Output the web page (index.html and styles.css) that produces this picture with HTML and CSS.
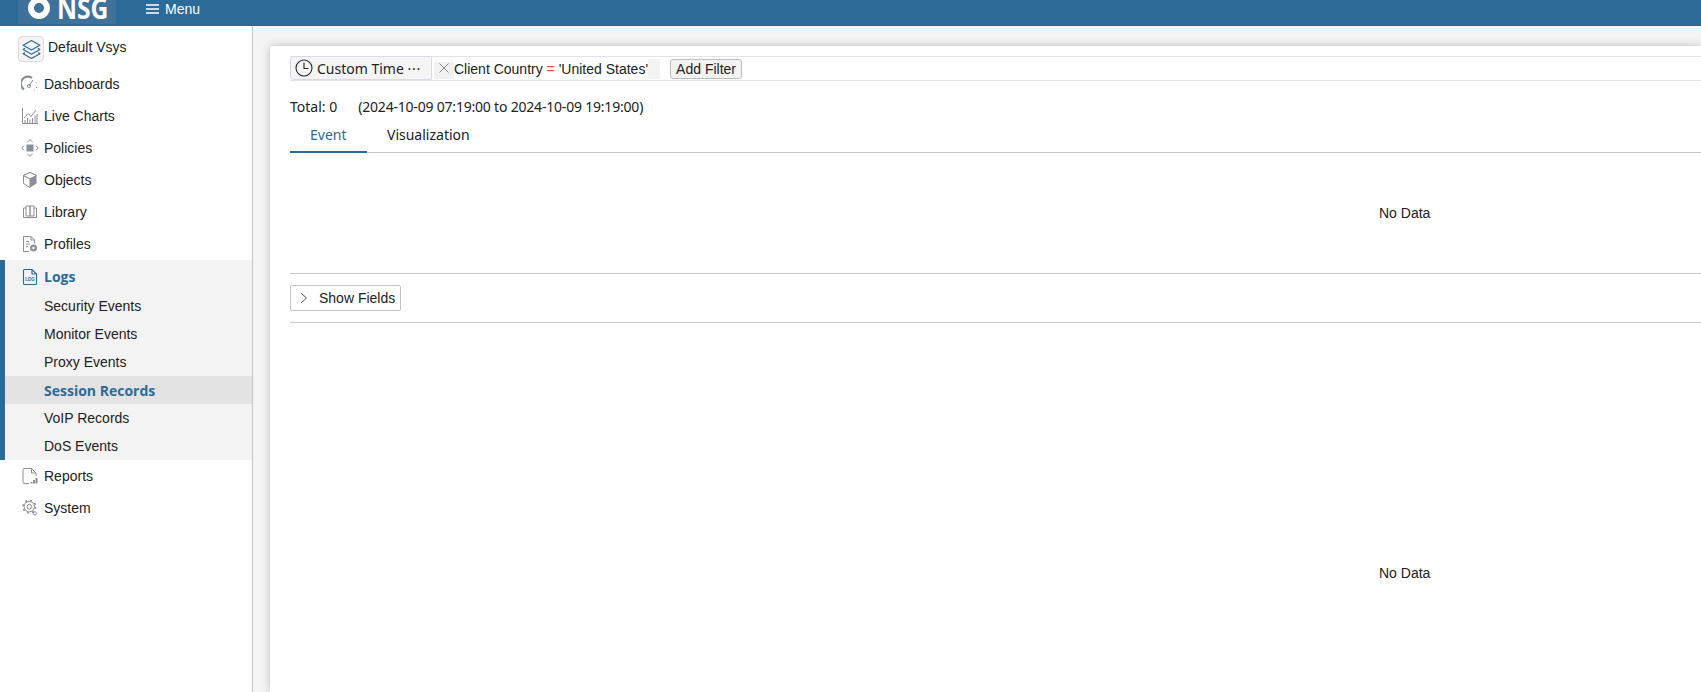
FILE: index.html
```html
<!DOCTYPE html>
<html lang="en">
<head>
<meta charset="utf-8">
<title>NSG Session Records</title>
<link rel="stylesheet" href="styles.css">
</head>
<body>
<header class="topbar">
  <div class="brand">
    <svg class="brand-ring" width="24" height="24" viewBox="0 0 24 24"><circle cx="12" cy="12" r="8" fill="none" stroke="#fff" stroke-width="6"/></svg>
    <span class="brand-name">NSG</span>
  </div>
  <div class="menu-toggle">
    <svg width="13" height="10" viewBox="0 0 13 10"><path d="M0 1h13M0 5h13M0 9h13" stroke="#fff" stroke-width="1.5"/></svg>
    <span>Menu</span>
  </div>
</header>
<div class="shell">
  <aside class="sidebar">
    <div class="vsys">
      <span class="vsys-icon">
        <svg width="19" height="19" viewBox="1 1 16 16" fill="none" stroke="#2c6a97" stroke-width="1" stroke-linejoin="round"><path d="M9 1.500 16 5.500 9 9.500 2 5.500Z"/><path d="M3.500 8 2 9l7 4 7-4-1.500-1"/><path d="M3.500 11.500 2 12.500l7 4 7-4-1.500-1"/></svg>
      </span>
      <span>Default Vsys</span>
    </div>
    <nav class="nav">
      <a class="nav-item">
        <svg class="ico" width="18" height="18" viewBox="0 0 18 18" fill="none" stroke="#8b8f97"><path d="M3 14.500A7 7 0 0 1 11 2.800" stroke-width="2.200"/><path d="M8 11 12 5" stroke-width="1"/><circle cx="8" cy="11" r="1.600" stroke-width="1"/><path d="M15 7.500v1M15.500 12v1M13 15h.8" stroke-width="1"/></svg>
        <span>Dashboards</span>
      </a>
      <a class="nav-item">
        <svg class="ico" width="18" height="18" viewBox="0 0 18 18" fill="none" stroke="#8b8f97" stroke-width="1"><path d="M1.500 1v15.500H17"/><path d="M3 11 7 6.500l3 3L15 3"/><path d="M4 16v-3M6.500 16v-5M9 16v-3.500M11.500 16v-5M14 16V8.500M16 16v-9"/></svg>
        <span>Live Charts</span>
      </a>
      <a class="nav-item">
        <svg class="ico" width="18" height="18" viewBox="0 0 18 18" fill="none" stroke="#8b8f97" stroke-width="1"><path d="M6.500 3 9 .8l2.500 2.200M6.500 15 9 17.200l2.500-2.200M3 6.500.8 9 3 11.500M15 6.500 17.200 9 15 11.500"/><rect x="6" y="6" width="6" height="6" fill="#8b8f97"/></svg>
        <span>Policies</span>
      </a>
      <a class="nav-item">
        <svg class="ico" width="18" height="18" viewBox="0 0 18 18"><path d="M9 1.500 15.500 4.500v8L9 16.500Z" fill="#8b8f97"/><path d="M9 1.500 2.500 4.500v8L9 16.500M2.500 4.500 9 7.800l6.500-3.300M9 7.800v8.700M9 1.500l6.500 3" fill="none" stroke="#8b8f97"/><path d="M2.500 4.500 9 1.500l6.500 3L9 7.800Z" fill="#fff" stroke="#8b8f97"/></svg>
        <span>Objects</span>
      </a>
      <a class="nav-item">
        <svg class="ico" width="18" height="18" viewBox="0 0 18 18" fill="none" stroke="#8b8f97" stroke-width="1"><path d="M5 3h4v10H5zM9 3h4v10H9z"/><path d="M5 5H2.500v9.500h13V5H13M9 14.500v1"/></svg>
        <span>Library</span>
      </a>
      <a class="nav-item">
        <svg class="ico" width="18" height="18" viewBox="0 0 18 18" fill="none" stroke="#8b8f97" stroke-width="1"><path d="M8 16.500H2.500v-15h7.500l3.500 3.500v3.500"/><path d="M10 1.500V5h3.500M5 6.500h3M5 9h4M5 11.500h2"/><circle cx="12.500" cy="13" r="3.500" fill="#8b8f97" stroke="none"/><circle cx="12.500" cy="13" r="1.200" fill="#fff" stroke="none"/></svg>
        <span>Profiles</span>
      </a>
      <div class="nav-group">
        <a class="nav-item nav-item-active">
          <svg class="ico" width="18" height="18" viewBox="0 0 18 18" fill="none" stroke="#2c6a97" stroke-width="1.100"><path d="M11 1.500H3.500a1 1 0 0 0-1 1v13a1 1 0 0 0 1 1h11a1 1 0 0 0 1-1V6Z"/><path d="M11 1.500V6h4.500"/><text class="ico-label" x="9" y="12.500" text-anchor="middle">LOG</text></svg>
          <span>Logs</span>
        </a>
        <a class="sub-item">Security Events</a>
        <a class="sub-item">Monitor Events</a>
        <a class="sub-item">Proxy Events</a>
        <a class="sub-item sub-item-active">Session Records</a>
        <a class="sub-item">VoIP Records</a>
        <a class="sub-item">DoS Events</a>
      </div>
      <a class="nav-item">
        <svg class="ico" width="18" height="18" viewBox="0 0 18 18" fill="none" stroke="#8b8f97" stroke-width="1"><path d="M8 16.500H3a1 1 0 0 1-1-1V2.500a1 1 0 0 1 1-1h7.500L15 6v3"/><path d="M10.500 1.500V6H15"/><path d="M10.500 16.500v-1.500M13 16.500v-3.500M15.500 16.500V11" stroke-width="2"/></svg>
        <span>Reports</span>
      </a>
      <a class="nav-item">
        <svg class="ico" width="18" height="18" viewBox="0 0 18 18" fill="none" stroke="#8b8f97"><circle cx="8.300" cy="7.700" r="5.200" stroke-width="1"/><circle cx="8.300" cy="7.700" r="6.300" stroke-width="1.500" stroke-dasharray="2 2.950"/><circle cx="8.300" cy="7.700" r="2.300" stroke-width="1"/><circle cx="13.800" cy="14.300" r="1.600" stroke-width="1"/></svg>
        <span>System</span>
      </a>
    </nav>
  </aside>
  <main class="content">
    <section class="card">
      <div class="filter-bar">
        <div class="time-chip">
          <svg width="18" height="18" viewBox="0 0 18 18" fill="none" stroke="#222" stroke-width="1.100"><circle cx="9" cy="9" r="8"/><path d="M9 3.500V9.500H13.500"/></svg>
          <span class="time-label">Custom Time <span class="dots">···</span></span>
        </div>
        <div class="filter-chip">
          <span class="chip-close">
            <svg width="10" height="10" viewBox="0 0 10 10"><path d="M.5.500l9 9M9.500.500l-9 9" stroke="#8a8a8a" stroke-width="1"/></svg>
          </span>
          <span>Client Country <b class="op">=</b> 'United States'</span>
          <span class="chip-end"></span>
        </div>
        <button class="add-filter">Add Filter</button>
      </div>
      <div class="summary">
        <span>Total: 0</span>
        <span class="range">(2024-10-09 07:19:00 to 2024-10-09 19:19:00)</span>
      </div>
      <div class="tabs">
        <span class="tab tab-active">Event</span>
        <span class="tab">Visualization</span>
      </div>
      <div class="empty empty-top">No Data</div>
      <div class="fields-row">
        <button class="show-fields">
          <svg width="8" height="12" viewBox="0 0 8 12" fill="none" stroke="#555" stroke-width="1"><path d="M1 1l5.500 5L1 11"/></svg>
          <span>Show Fields</span>
        </button>
      </div>
      <div class="empty empty-bottom">No Data</div>
    </section>
  </main>
</div>
</body>
</html>
```
FILE: styles.css
```css
* { box-sizing: border-box; }
html, body { margin: 0; height: 100%; overflow: hidden; }
body { width: 1701px; height: 692px; font: 14px/20px "Liberation Sans", Arial, sans-serif; color: #222; background: #f4f4f4; }

.topbar { height: 26px; background: #2c6a97; display: flex; color: #fff; overflow: hidden; }
.brand { width: 98px; margin-left: 18px; height: 24px; background: #3f729a; display: flex; align-items: center; padding-left: 9px; gap: 6px; }
.brand-ring { margin-top: -8px; flex: none; }
.brand-name { font: 700 28px/30px "Open Sans", sans-serif; margin-top: -9px; transform: scaleX(.88); transform-origin: left; }
.menu-toggle { margin-left: 30px; display: flex; align-items: center; gap: 6px; height: 18px; }

.shell { display: flex; height: 666px; }
.sidebar { width: 253px; flex: none; background: #fff; border-right: 1px solid #c8c8c8; }
.vsys { height: 42px; padding: 10px 0 0 18px; display: flex; gap: 4px; }
.vsys > span:last-child { margin-top: 1px; }
.vsys-icon { width: 26px; height: 26px; border: 1px solid #dcdcdc; border-radius: 4px; background: #f4f4f4; display: flex; align-items: center; justify-content: center; }

.nav-item { height: 32px; display: flex; align-items: center; padding-left: 21px; gap: 5px; color: #222; }
.ico { flex: none; width: 18px; height: 18px; }
.ico-label { font: 700 4.500px "Liberation Sans", sans-serif; fill: #2c6a97; stroke: none; }
.nav-group { background: #f3f3f3; border-left: 5px solid #2c6a97; height: 200px; }
.nav-group .nav-item { padding-left: 16px; }
.nav-item-active { color: #2c6a97; font: 700 14px/20px "Open Sans", sans-serif; padding-top: 1px; }
.sub-item { display: block; height: 28px; line-height: 28px; padding-left: 39px; }
.sub-item-active { background: #e3e3e3; color: #2c6a97; font: 700 14px/30px "Open Sans", sans-serif; }

.content { flex: 1; min-width: 0; padding: 20px 0 0 17px; }
.card { background: #fff; height: 646px; box-shadow: 0 0 8px rgba(0,0,0,.22); padding: 10px 0 0 20px; font-family: "Noto Sans", sans-serif; }

.filter-bar { height: 25px; display: flex; align-items: center; border-top: 1px solid #e2e2ea; border-bottom: 1px solid #e2e2ea; }
.time-chip { width: 142px; height: 24px; flex: none; align-self: flex-start; display: flex; align-items: center; gap: 4px; padding-left: 4px; background: #f5f5f5; border: 1px solid #dadae4; border-radius: 4px 0 0 4px; margin-top: -1px; white-space: nowrap; }
.time-label { margin-top: 1px; }
.dots { letter-spacing: .8px; }
.filter-chip { display: flex; align-items: center; height: 22px; margin-left: 2px; font-family: "Liberation Sans", sans-serif; white-space: nowrap; }
.chip-close { width: 20px; height: 17px; margin-top: 3px; padding-bottom: 5px; background: #f1f1f1; display: flex; align-items: center; justify-content: center; }
.op { color: #e2571e; font-weight: 400; }
.chip-end { width: 12px; height: 20px; background: #f3f3f3; }
.add-filter { margin-left: 10px; height: 20px; width: 72px; padding: 0; font: 14px/18px "Liberation Sans", sans-serif; color: #222; background: #f3f3f3; border: 1px solid #bdbdbd; border-radius: 3px; }

.summary { display: flex; gap: 21px; height: 20px; margin-top: 16px; white-space: nowrap; }
.range { letter-spacing: -.2px; }
.tabs { display: flex; height: 35px; margin-top: 1px; border-bottom: 1px solid #c8c8c8; }
.tab { height: 35px; line-height: 34px; padding: 0 20px; }
.tab-active { color: #2c6a97; width: 77px; border-bottom: 2px solid #2c6a97; }

.empty { font-family: "Liberation Sans", sans-serif; padding-left: 1089px; white-space: nowrap; }
.empty-top { height: 121px; padding-top: 50px; border-bottom: 1px solid #c8c8c8; }
.fields-row { height: 49px; padding-top: 11px; border-bottom: 1px solid #c8c8c8; }
.show-fields { display: flex; align-items: center; width: 111px; height: 26px; padding: 0 0 0 9px; gap: 11px; background: #fff; border: 1px solid #c4c4c4; border-radius: 2px; font: 14px/20px "Liberation Sans", sans-serif; color: #222; }
.empty-bottom { padding-top: 240px; }
```
